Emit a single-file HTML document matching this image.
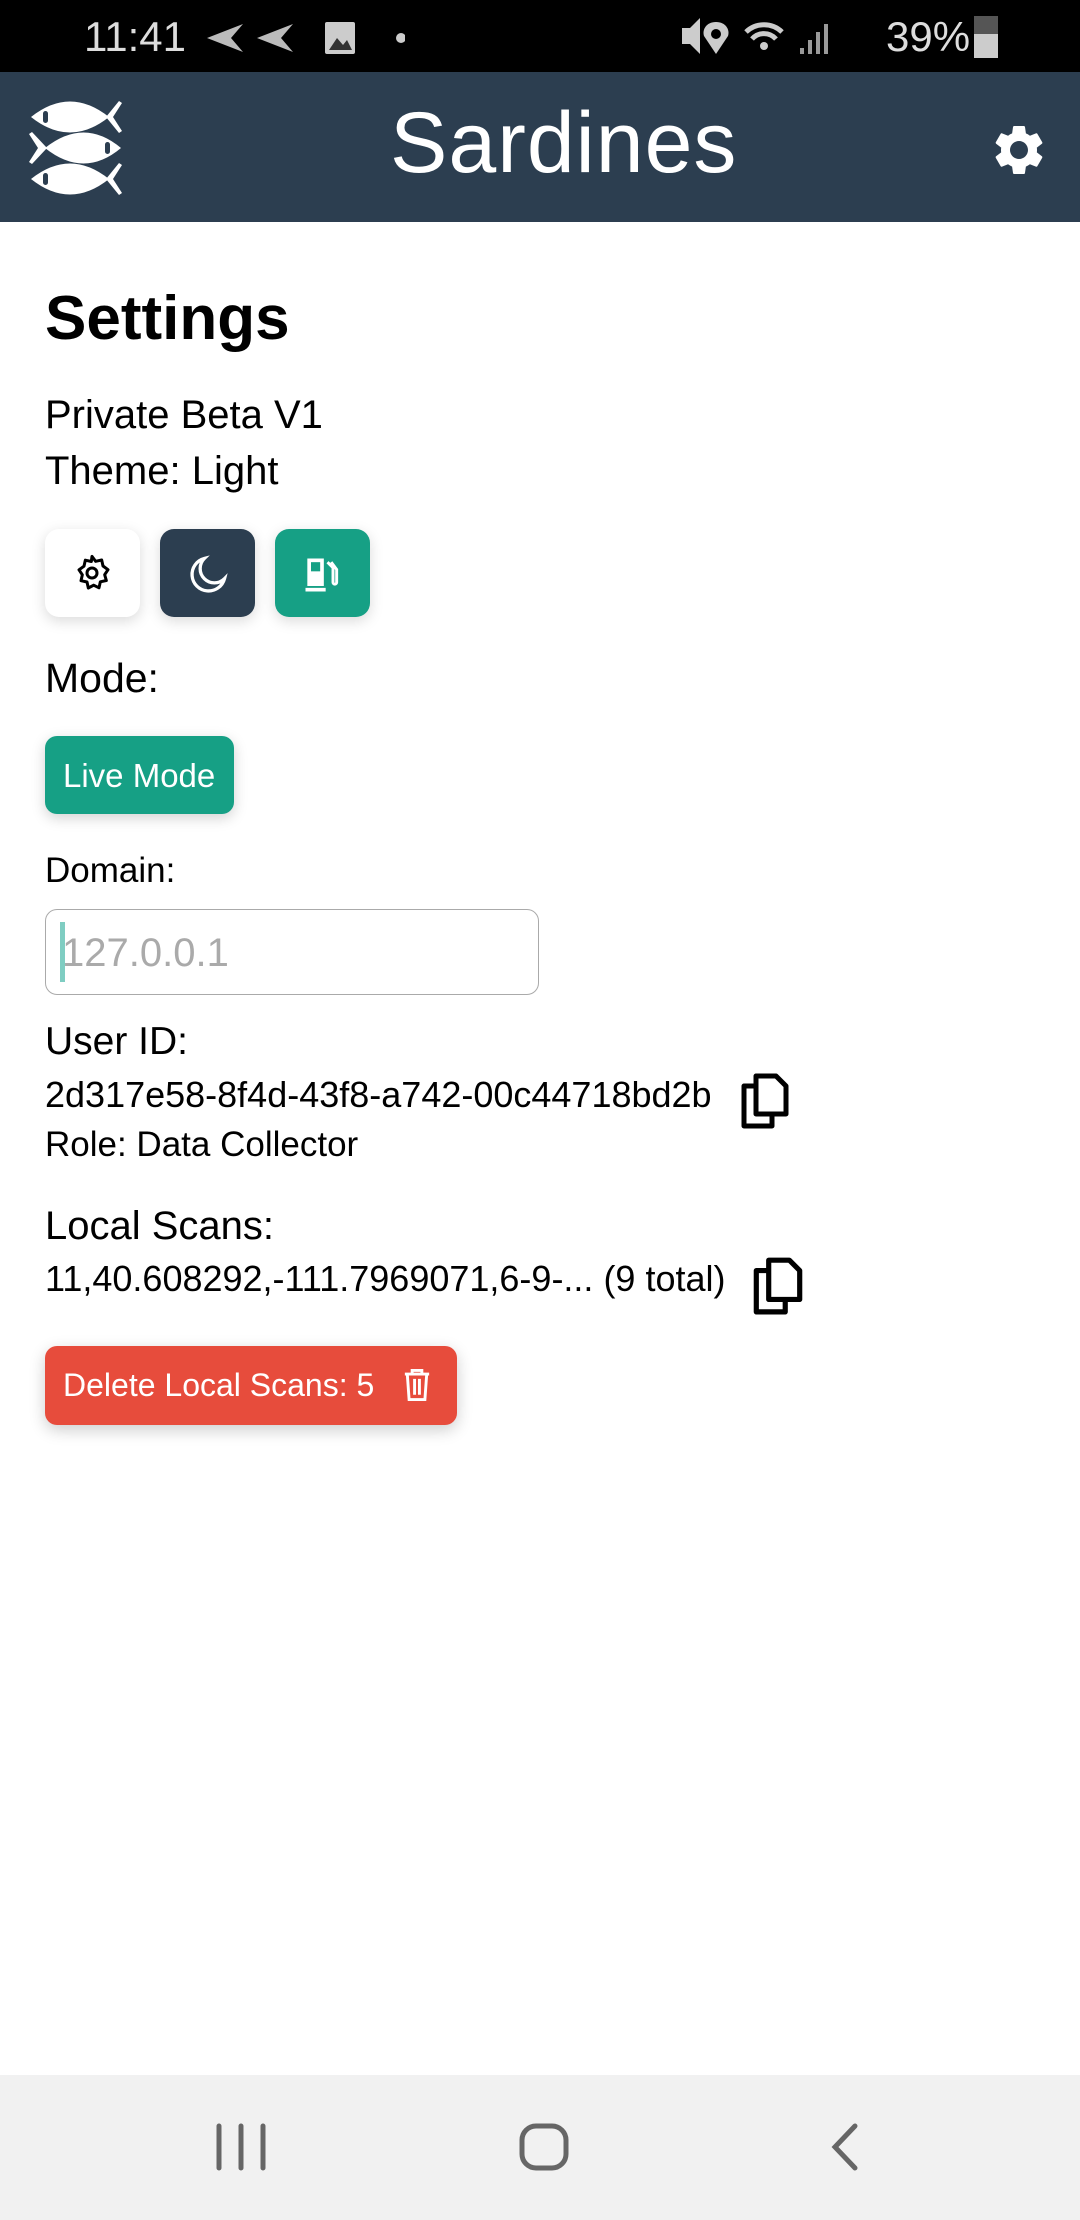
<!DOCTYPE html>
<html><head><meta charset="utf-8"><style>
*{margin:0;padding:0;box-sizing:border-box}
body{width:1080px;height:2220px;background:#fff;font-family:"Liberation Sans",sans-serif;position:relative;overflow:hidden;color:#000}
.abs{position:absolute}
.t{position:absolute;left:45px;white-space:nowrap;line-height:1}
</style></head><body>
<div class="abs" style="left:0;top:0;width:1080px;height:72px;background:#000"></div>
<div class="t" style="left:84px;top:16px;font-size:42px;color:#ddd">11:41</div>
<svg class="abs" style="left:205px;top:18px" width="200" height="40" viewBox="0 0 200 40"><path d="M2 20 L38 6 L26 20 L38 34Z" fill="#bbb"/><path d="M52 20 L88 6 L76 20 L88 34Z" fill="#bbb"/><rect x="120" y="4" width="30" height="32" rx="2" fill="#ccc"/><path d="M124 32 L132 20 L138 27 L142 22 L147 32Z" fill="#333"/><circle cx="196" cy="20" r="5" fill="#ccc"/></svg>
<svg class="abs" style="left:680px;top:14px" width="170" height="44" viewBox="0 0 170 44"><path d="M2 14h8l10-10v36l-10-10h-8z" fill="#ccc"/><path d="M36 8 c-10 0 -14 8 -12 14 l12 18 l12 -18 c2-6-2-14-12-14z" fill="#ccc"/><circle cx="36" cy="20" r="5" fill="#000"/><path d="M66 18 a26 26 0 0 1 36 0 M72 25 a16 16 0 0 1 24 0" stroke="#ccc" stroke-width="5" fill="none"/><circle cx="84" cy="32" r="4" fill="#ccc"/><path d="M120 40h4v-6h-4zM128 40h4v-14h-4zM136 40h4v-22h-4zM144 40h4v-30h-4z" fill="#999"/></svg>
<div class="t" style="left:886px;top:16px;font-size:42px;color:#ddd">39%</div>
<div class="abs" style="left:974px;top:16px;width:24px;height:42px;background:#ccc"></div>
<div class="abs" style="left:974px;top:16px;width:24px;height:18px;background:#555"></div>

<div class="abs" style="left:0;top:72px;width:1080px;height:150px;background:#2c3e50"></div>
<svg class="abs" style="left:0;top:0" width="140" height="222" viewBox="0 0 140 222">
<g fill="#fff">
<path d="M31 117 Q70 86 109 117 Q70 148 31 117Z"/><path d="M106 117 L119 101 L122 103 L113 117 L122 131 L119 133Z"/>
<path d="M45 148 Q84 117 121 148 Q84 179 45 148Z"/><path d="M47 148 L32 132 L29 134 L38 148 L29 162 L32 164Z"/>
<path d="M31 179 Q70 148 109 179 Q70 210 31 179Z"/><path d="M106 179 L119 163 L122 165 L113 179 L122 193 L119 195Z"/>
</g>
<g fill="#2c3e50"><rect x="43" y="111" width="5" height="12" rx="2.5"/><rect x="105" y="142" width="5" height="12" rx="2.5"/><rect x="43" y="173" width="5" height="12" rx="2.5"/></g></svg>
<div class="t" style="left:390px;top:100px;font-size:86px;color:#fff;font-weight:300;letter-spacing:1px">Sardines</div>
<svg class="abs" style="left:989px;top:120px" width="60" height="60" viewBox="0 0 24 24"><path fill="#fff" d="M19.14 12.94c.04-.3.06-.61.06-.94 0-.32-.02-.64-.07-.94l2.030-1.58a.49.49 0 0 0 .12-.61l-1.92-3.32a.49.49 0 0 0-.59-.22l-2.39.96c-.5-.38-1.03-.7-1.62-.94l-.36-2.54a.48.48 0 0 0-.48-.41h-3.840c-.24 0-.43.17-.47.41l-.36 2.54c-.59.24-1.13.57-1.62.94l-2.39-.96c-.22-.08-.47 0-.59.22L2.74 8.87c-.12.21-.08.47.12.61l2.03 1.58c-.05.3-.09.63-.09.94s.02.64.07.94l-2.03 1.58a.49.49 0 0 0-.12.61l1.92 3.32c.12.22.37.29.59.22l2.39-.96c.5.38 1.03.7 1.62.94l.36 2.54c.05.24.24.41.48.41h3.84c.24 0 .44-.17.47-.41l.36-2.54c.59-.24 1.13-.56 1.62-.94l2.39.96c.22.08.47 0 .59-.22l1.92-3.32c.12-.22.07-.47-.12-.61l-2.01-1.58zM12 15.6c-1.98 0-3.6-1.62-3.6-3.6s1.62-3.6 3.6-3.6 3.6 1.62 3.6 3.6-1.62 3.6-3.6 3.6z"/></svg>

<div class="t" style="top:288px;font-size:62px;font-weight:bold">Settings</div>
<div class="t" style="top:395px;font-size:40px">Private Beta V1</div>
<div class="t" style="top:451px;font-size:40px">Theme: Light</div>

<div class="abs" style="left:45px;top:529px;width:95px;height:88px;border-radius:14px;background:#fff;box-shadow:0 4px 14px rgba(0,0,0,.15)"></div>
<svg class="abs" style="left:72px;top:553px" width="40" height="40" viewBox="0 0 24 24" fill="none" stroke="#000" stroke-width="1.8" stroke-linejoin="round"><path d="M12 2l2.2 3 3.6-.8.8 3.6 3 2.2-2 3 1 3.5-3.6.8-.8 3.6-3.2-1.6L9.8 21l-.8-3.6-3.6-.8.8-3.5-2-3 3-2.2.8-3.6 3.6.8z"/><circle cx="12" cy="12" r="3"/></svg>
<div class="abs" style="left:160px;top:529px;width:95px;height:88px;border-radius:14px;background:#2c3e50;box-shadow:0 4px 14px rgba(0,0,0,.15)"></div>
<svg class="abs" style="left:186px;top:553px" width="44" height="44" viewBox="0 0 24 24" fill="none" stroke="#fff" stroke-width="1.8" stroke-linecap="round"><path d="M10 3a9 9 0 1 0 11 11A7 7 0 0 1 10 3z"/></svg>
<div class="abs" style="left:275px;top:529px;width:95px;height:88px;border-radius:14px;background:#16a085;box-shadow:0 4px 14px rgba(0,0,0,.15)"></div>
<svg class="abs" style="left:300px;top:553px" width="44" height="44" viewBox="0 0 24 24" fill="#fff"><path d="M4 3h9v15H4z M3 19h11v2H3z"/><rect x="6" y="5" width="5" height="5" fill="#16a085"/><path d="M15 5l3 3v8a1 1 0 0 0 2 0V9l-3-4" stroke="#fff" stroke-width="1.6" fill="none"/></svg>

<div class="t" style="top:658px;font-size:41px">Mode:</div>
<div class="abs" style="left:45px;top:736px;width:189px;height:78px;border-radius:12px;background:#16a085;box-shadow:0 4px 14px rgba(0,0,0,.18)"></div>
<div class="t" style="left:63px;top:759px;font-size:33px;color:#fff">Live Mode</div>

<div class="t" style="top:853px;font-size:35px">Domain:</div>
<div class="abs" style="left:45px;top:909px;width:494px;height:86px;border:1.5px solid #aaa;border-radius:12px"></div>
<div class="abs" style="left:60px;top:922px;width:5px;height:60px;background:#7fcdc2"></div>
<div class="t" style="left:62px;top:933px;font-size:40px;color:#aaa">127.0.0.1</div>

<div class="t" style="top:1022px;font-size:39px">User ID:</div>
<div class="t" style="top:1077px;font-size:36px">2d317e58-8f4d-43f8-a742-00c44718bd2b</div>
<div class="t" style="top:1127px;font-size:35px">Role: Data Collector</div>
<svg class="abs" style="left:738px;top:1070px" width="54" height="60" viewBox="0 0 54 60" fill="none" stroke="#000" stroke-width="5" stroke-linejoin="round"><path d="M18 6h20l10 10v28H18z"/><path d="M18 16H6v40h28v-12"/></svg>

<div class="t" style="top:1206px;font-size:40px">Local Scans:</div>
<div class="t" style="top:1261px;font-size:36px">11,40.608292,-111.7969071,6-9-... (9 total)</div>
<svg class="abs" style="left:750px;top:1254px" width="56" height="62" viewBox="0 0 54 60" fill="none" stroke="#000" stroke-width="5" stroke-linejoin="round"><path d="M18 6h20l10 10v28H18z"/><path d="M18 16H6v40h28v-12"/></svg>

<div class="abs" style="left:45px;top:1346px;width:412px;height:79px;border-radius:12px;background:#e74c3c;box-shadow:0 5px 16px rgba(0,0,0,.2)"></div>
<div class="t" style="left:63px;top:1369px;font-size:32px;color:#fff">Delete Local Scans: 5</div>
<svg class="abs" style="left:402px;top:1368px" width="30" height="34" viewBox="0 0 24 28" fill="none" stroke="#fff" stroke-width="2.4"><path d="M2 5h20M8 5V2h8v3M4 5l1.5 21h13L20 5M10 9v13M14 9v13"/></svg>

<div class="abs" style="left:0;top:2075px;width:1080px;height:145px;background:#f1f1f1"></div>
<svg class="abs" style="left:210px;top:2120px" width="660" height="56" viewBox="0 0 660 56" fill="none" stroke="#666" stroke-width="5" stroke-linecap="round"><path d="M9 6v42M31 6v42M53 6v42"/><rect x="312" y="6" width="44" height="42" rx="14"/><path d="M645 6l-20 21 20 21"/></svg>
</body></html>
